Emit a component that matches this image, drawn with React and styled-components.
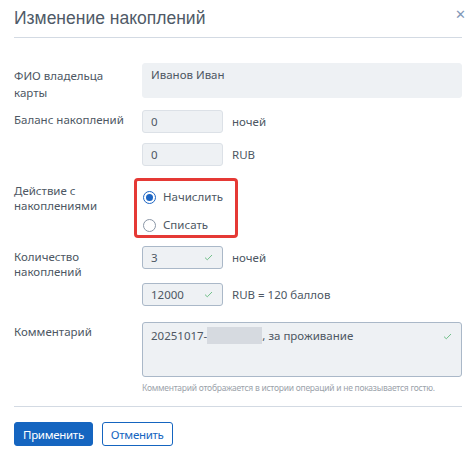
import React from "react";
import styled, { createGlobalStyle } from "styled-components";

const Global = createGlobalStyle`
  body {
    margin: 0;
    background: #fff;
    font-family: "Noto Sans", "Open Sans", sans-serif;
    font-size: 11.5px;
    color: #4d5763;
  }
`;

const Dialog = styled.div`
  width: 476px;
  height: 460px;
  padding: 0 14px;
  box-sizing: border-box;
  position: relative;
`;

const Header = styled.div`
  height: 37px;
  border-bottom: 1px solid #d3dae3;
  display: flex;
  align-items: center;
`;

const Title = styled.h1`
  margin: 0;
  font-family: "Liberation Sans", Arial, sans-serif;
  font-size: 17.5px;
  font-weight: 400;
  color: #4f5a67;
`;

const Close = styled.span`
  position: absolute;
  right: 10px;
  top: 5px;
  font-size: 13px;
  color: #8298b8;
`;

const Body = styled.div`
  padding-top: 25px;
`;

const Row = styled.div`
  display: grid;
  grid-template-columns: 128px 1fr;
  grid-template-rows: ${(p) => (p.$h ? `${p.$h}px` : "auto")};
  margin-top: ${(p) => p.$gap || 0}px;
`;

const Label = styled.div`
  line-height: ${(p) => p.$lh || 14}px;
  padding-top: ${(p) => p.$pt || 4}px;
`;

const Fields = styled.div`
  display: flex;
  flex-direction: column;
  gap: ${(p) => p.$gap || 10}px;
`;

const Line = styled.div`
  display: flex;
  align-items: center;
  gap: 9px;
`;

const Box = styled.div`
  position: relative;
  box-sizing: border-box;
  width: ${(p) => (p.$wide ? "100%" : "81px")};
  height: ${(p) => p.$h || 23}px;
  background: #eef1f4;
  border: 1px solid ${(p) => (p.$valid ? "#aab8c8" : p.$plain ? "#eef1f4" : "#dce1e7")};
  border-radius: 3px;
  padding: ${(p) => p.$pt || 3}px 8px 0;
  line-height: 16px;
`;

const Check = styled.svg`
  position: absolute;
  right: 9px;
  top: ${(p) => p.$top || 7}px;
`;

const Tick = ({ top }) => (
  <Check $top={top} width="9" height="7" viewBox="0 0 9 7">
    <path d="M1 3.6 L3.3 5.8 L8 1" fill="none" stroke="#72c08a" strokeWidth="1" />
  </Check>
);

const Unit = styled.span``;

const Highlight = styled.div`
  margin-left: -8px;
  width: 104px;
  height: 60px;
  box-sizing: border-box;
  border: 3px solid #e53935;
  border-radius: 4px;
  padding: 8px 0 0 6px;
  display: flex;
  flex-direction: column;
  gap: 12px;
`;

const Radio = styled.label`
  display: flex;
  align-items: center;
  gap: 7px;
  line-height: 16px;
`;

const Dot = styled.span`
  width: 13px;
  height: 13px;
  box-sizing: border-box;
  border-radius: 50%;
  border: 1px solid ${(p) => (p.$on ? "#1e66c4" : "#8a96a6")};
  display: flex;
  align-items: center;
  justify-content: center;
  &::after {
    content: "";
    width: 7px;
    height: 7px;
    border-radius: 50%;
    background: ${(p) => (p.$on ? "#1e66c4" : "transparent")};
  }
`;

const Blur = styled.span`
  display: inline-block;
  width: 55px;
  height: 17px;
  vertical-align: -4px;
  background: #d6dae0;
`;

const Hint = styled.div`
  font-size: 8.5px;
  color: #9ca3ab;
  margin-top: 5px;
  letter-spacing: -0.25px;
`;

const Footer = styled.div`
  margin-top: 13px;
  border-top: 1px solid #d3dae3;
  padding-top: 15px;
  display: flex;
  gap: 9px;
`;

const Button = styled.button`
  height: 24px;
  padding: 0 8px;
  border-radius: 3px;
  font-family: inherit;
  font-size: 11.5px;
  border: 1px solid #1565c0;
  background: ${(p) => (p.$primary ? "#1565c0" : "#fff")};
  color: ${(p) => (p.$primary ? "#fff" : "#1565c0")};
  letter-spacing: -0.3px;
`;

export default function App() {
  return (
    <>
      <Global />
      <Dialog>
        <Header>
          <Title>Изменение накоплений</Title>
        </Header>
        <Close>✕</Close>
        <Body>
          <Row $h={35}>
            <Label $lh={17} $pt={4}>ФИО владельца<br />карты</Label>
            <Box $wide $plain $h={35} $pt={3}>Иванов Иван</Box>
          </Row>
          <Row $gap={12}>
            <Label $pt={3}>Баланс накоплений</Label>
            <Fields>
              <Line><Box>0</Box><Unit>ночей</Unit></Line>
              <Line><Box>0</Box><Unit>RUB</Unit></Line>
            </Fields>
          </Row>
          <Row $gap={12}>
            <Label $pt={5} $lh={15}>Действие с<br />накоплениями</Label>
            <Highlight>
              <Radio><Dot $on />Начислить</Radio>
              <Radio><Dot />Списать</Radio>
            </Highlight>
          </Row>
          <Row $gap={8}>
            <Label $pt={3} $lh={15}>Количество<br />накоплений</Label>
            <Fields $gap={14}>
              <Line><Box $valid>3<Tick /></Box><Unit>ночей</Unit></Line>
              <Line><Box $valid>12000<Tick /></Box><Unit>RUB = 120 баллов</Unit></Line>
            </Fields>
          </Row>
          <Row $gap={16}>
            <Label $pt={3}>Комментарий</Label>
            <div>
              <Box $wide $valid $h={55} $pt={4}>
                20251017-<Blur />, за проживание
                <Tick top={10} />
              </Box>
              <Hint>Комментарий отображается в истории операций и не показывается гостю.</Hint>
            </div>
          </Row>
          <Footer>
            <Button $primary>Применить</Button>
            <Button>Отменить</Button>
          </Footer>
        </Body>
      </Dialog>
    </>
  );
}
